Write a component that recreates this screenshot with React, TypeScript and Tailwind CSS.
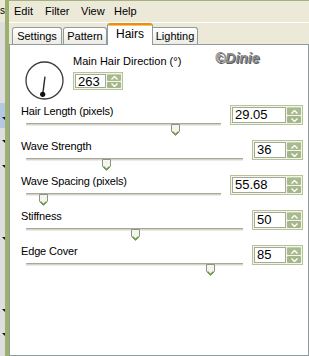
import React from "react";

const FONT = '"Liberation Sans", Arial, sans-serif';

function Chevron({ up }: { up?: boolean }) {
  return (
    <svg width="7" height="4" viewBox="0 0 7 4">
      {up ? (
        <path d="M0.5 3.5 L3.5 0.5 L6.5 3.5" fill="none" stroke="#ffffff" strokeWidth="1.4" />
      ) : (
        <path d="M0.5 0.5 L3.5 3.5 L6.5 0.5" fill="none" stroke="#ffffff" strokeWidth="1.4" />
      )}
    </svg>
  );
}

function Spin({ value, boxClass }: { value: string; boxClass: string }) {
  return (
    <div className={`${boxClass} border border-[#b3c496] bg-[#f3f5ec] flex p-[1px] gap-[1px] shrink-0`}>
      <div className="flex-1 border border-[#a3a996] bg-white text-[13px] leading-[14px] pl-[2px] text-black overflow-hidden">
        {value}
      </div>
      <div className="w-[14px] flex flex-col gap-[1px]">
        <div className="flex-1 bg-[#a9bb8e] flex items-center justify-center rounded-[1px] border-t border-[#c4d2ab]">
          <Chevron up />
        </div>
        <div className="flex-1 bg-[#a5b78a] flex items-center justify-center rounded-[1px]">
          <Chevron />
        </div>
      </div>
    </div>
  );
}

function Thumb({ left }: { left: number }) {
  return (
    <svg
      width="9"
      height="12"
      viewBox="0 0 9 12"
      className="absolute top-[1px]"
      style={{ left }}
    >
      <path d="M0.5 0.5 H8.5 V7.5 L4.5 11.5 L0.5 7.5 Z" fill="#f5f5f0" stroke="#8e9484" strokeWidth="1" />
      <path d="M1.5 7.5 L4.5 10.5 L7.5 7.5" fill="none" stroke="#6f9a3c" strokeWidth="1.2" />
    </svg>
  );
}

type Row = { label: string; value: string; wide: boolean; thumb: number };

const rows: Row[] = [
  { label: "Hair Length (pixels)", value: "29.05", wide: true, thumb: 145 },
  { label: "Wave Strength", value: "36", wide: false, thumb: 76 },
  { label: "Wave Spacing (pixels)", value: "55.68", wide: true, thumb: 13 },
  { label: "Stiffness", value: "50", wide: false, thumb: 105 },
  { label: "Edge Cover", value: "85", wide: false, thumb: 180 },
];

function Tri() {
  return (
    <svg width="3" height="3" viewBox="0 0 3 3" className="ml-[2px]">
      <path d="M0 0 H3 V3 Z" fill="#111" />
    </svg>
  );
}

export default function App() {
  return (
    <div
      className="w-[309px] h-[356px] flex overflow-hidden bg-white text-black"
      style={{ fontFamily: FONT }}
    >
      {/* left fragment strip */}
      <div className="w-[5px] flex flex-col bg-[#dedede] overflow-hidden shrink-0">
        <div className="h-[22px] bg-[#ece9d8] text-[10px] leading-[12px] pt-[5px]">s</div>
        <div className="mt-[81px] h-[25px] bg-[#b4c8e4] pt-[14px]">
          <Tri />
        </div>
        <div className="mt-[12px]">
          <Tri />
        </div>
        <div className="mt-[22px]">
          <Tri />
        </div>
        <div className="mt-[69px]">
          <Tri />
        </div>
        <div className="mt-[69px]">
          <Tri />
        </div>
        <div className="mt-[21px]">
          <Tri />
        </div>
      </div>
      {/* green bar */}
      <div className="w-[4px] bg-[#9cb070] shrink-0" />

      {/* main */}
      <div className="flex-1 flex flex-col min-w-0">
        {/* menu */}
        <div className="h-[23px] border-t border-[#a3b37d] border-b border-b-white bg-[#ece9d8] flex items-center text-[11px] leading-[13px] pl-[5px]">
          <span className="w-[31px]">Edit</span>
          <span className="w-[36px]">Filter</span>
          <span className="w-[33px]">View</span>
          <span>Help</span>
        </div>
        {/* tabs */}
        <div className="h-[21px] bg-[#ece9d8] flex items-end pl-[3px] text-[11px] leading-[13px]">
          <div className="w-[50px] h-[17px] border border-b-0 border-[#919b9c] rounded-t-[3px] bg-gradient-to-b from-white to-[#ecebe5] flex items-center justify-center">
            Settings
          </div>
          <div className="ml-[1px] w-[44px] h-[17px] border border-b-0 border-[#919b9c] rounded-t-[3px] bg-gradient-to-b from-white to-[#ecebe5] flex items-center justify-center">
            Pattern
          </div>
          <div className="w-[46px] h-[22px] -mb-px relative z-10 border-x border-[#919b9c] rounded-t-[3px] bg-white flex flex-col">
            <div className="h-[2px] bg-[#e68b2c] rounded-t-[2px]" />
            <div className="h-[1px] bg-[#ffc73c]" />
            <div className="flex-1 flex items-start justify-center pt-[2px] text-[12px]">Hairs</div>
          </div>
          <div className="w-[45px] h-[17px] border border-b-0 border-l-0 border-[#919b9c] rounded-tr-[3px] bg-gradient-to-b from-white to-[#ecebe5] flex items-center justify-center">
            Lighting
          </div>
        </div>
        {/* panel */}
        <div className="flex-1 relative border border-[#919b9c] bg-white">
          <div className="absolute left-[205px] top-[5px] text-[14px] leading-[16px] font-bold italic text-[#8c8c8c] [text-shadow:1px_1px_0_#5a5a5a]">
            ©Dinie
          </div>
          {/* dial row */}
          <div className="h-[60px] flex items-start">
            <svg width="41" height="41" viewBox="0 0 41 41" className="ml-[14px] mt-[15px] shrink-0">
              <circle cx="20.5" cy="20.5" r="18.5" fill="none" stroke="#3a3a3a" strokeWidth="1.3" />
              <line x1="21" y1="16.7" x2="18.7" y2="34.3" stroke="#2a2a2a" strokeWidth="1.4" />
              <circle cx="18.7" cy="34.3" r="2.6" fill="#111" />
            </svg>
            <div className="ml-[8px] mt-[10px] flex flex-col">
              <div className="text-[11px] leading-[13px] h-[13px] whitespace-nowrap">Main Hair Direction (°)</div>
              <div className="mt-[4px]">
                <Spin value="263" boxClass="w-[50px] h-[18px]" />
              </div>
            </div>
          </div>
          {/* slider rows */}
          {rows.map((r) => (
            <div key={r.label} className="h-[35px] flex items-start">
              <div className="flex-1 pl-[11px] min-w-0">
                <div className="text-[11px] leading-[13px] h-[13px] whitespace-nowrap tracking-[-0.15px]">
                  {r.label}
                </div>
                <div className="relative h-[13px] ml-[5px]">
                  <div className="mt-[5px] h-[3px] border-t border-[#a8a89a] bg-[#d4d4c8] border-b border-b-[#ececE4] rounded-l-[1px]" />
                  <Thumb left={r.thumb} />
                </div>
              </div>
              <div className="ml-[9px] mr-[5px]">
                <Spin value={r.value} boxClass={r.wide ? "w-[73px] h-[20px]" : "w-[51px] h-[20px]"} />
              </div>
            </div>
          ))}
        </div>
      </div>
    </div>
  );
}
